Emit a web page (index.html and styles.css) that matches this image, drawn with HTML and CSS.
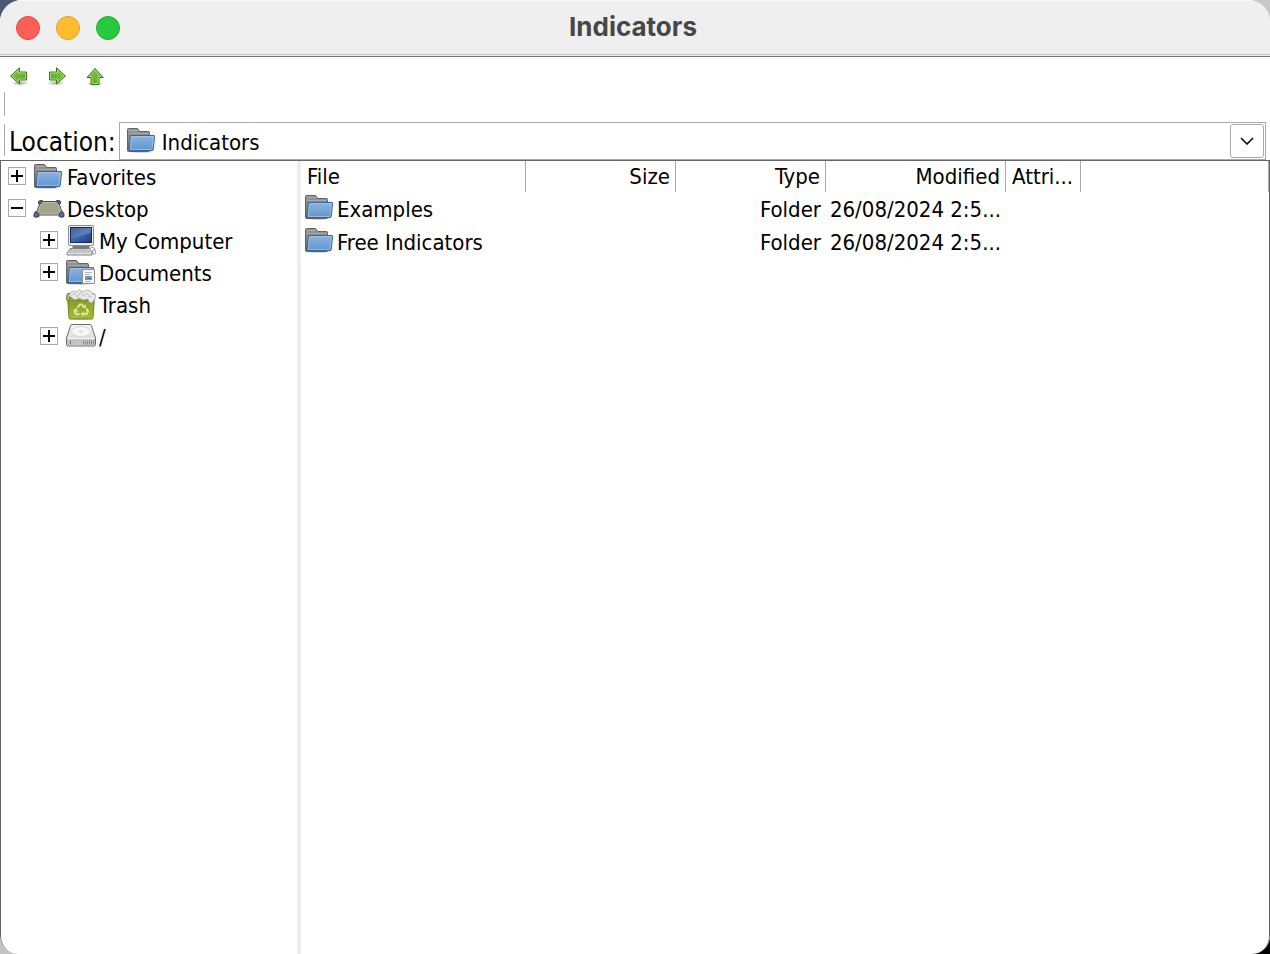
FILE: index.html
```html
<!DOCTYPE html>
<html lang="en">
<head>
<meta charset="utf-8">
<title>Indicators</title>
<link rel="stylesheet" href="styles.css">
</head>
<body>
<svg class="defs" aria-hidden="true">
  <defs>
    <linearGradient id="blue" x1="0" y1="0" x2="0" y2="1"><stop offset="0" stop-color="#8db5e0"/><stop offset="1" stop-color="#6095cd"/></linearGradient>
    <linearGradient id="gray" x1="0" y1="0" x2="0" y2="1"><stop offset="0" stop-color="#999"/><stop offset="1" stop-color="#696969"/></linearGradient>
    <linearGradient id="green" x1="0" y1="0" x2="1" y2="1"><stop offset="0" stop-color="#8bc95a"/><stop offset="1" stop-color="#4ba80c"/></linearGradient>
    <linearGradient id="screen" x1="0" y1="0" x2="1" y2="1"><stop offset="0" stop-color="#173a82"/><stop offset=".5" stop-color="#3e67ae"/><stop offset="1" stop-color="#163a83"/></linearGradient>
    <linearGradient id="metal" x1="0" y1="0" x2="0" y2="1"><stop offset="0" stop-color="#f8f8f8"/><stop offset="1" stop-color="#cfcfcf"/></linearGradient>
    <linearGradient id="bin" x1="0" y1="0" x2="0" y2="1"><stop offset="0" stop-color="#819720"/><stop offset="1" stop-color="#aabd3c"/></linearGradient>
    <radialGradient id="shade"><stop offset="0" stop-color="#000" stop-opacity=".35"/><stop offset="1" stop-color="#000" stop-opacity="0"/></radialGradient>
  </defs>
  <symbol id="folder" viewBox="0 0 32 32">
    <ellipse cx="15" cy="26.500" rx="14" ry="2" fill="url(#shade)"/>
    <path d="M1.500 25.500V4.500q0-1 1-1h8.500q1 0 1.500 1l1 2h9q1 0 1 1v18q0 1-1 1H2.500q-1 0-1-1z" fill="url(#gray)" stroke="#626262"/>
    <path d="M3 5.500h9M3 8.500h20" stroke="#b0b0b0" stroke-width=".7"/>
    <path d="M4.500 10.500h23.600q.6 0 .5.700l-1.300 13q-.1 1.300-1.300 1.300H4q-1 0-.8-1z" fill="url(#blue)" stroke="#3465a4"/>
    <path d="M5.300 11.500h22l-1.200 12q-.1 1-1 1H4.400z" fill="none" stroke="#a9c8ea" stroke-width=".7"/>
  </symbol>
  <symbol id="desktop" viewBox="0 0 32 32">
    <path d="M7.500 8.500h18l4.500 13.500H2.500z" fill="#a4a48f" stroke="#4f4f43"/>
    <path d="M8.300 9.500h16.400l3.800 11.500H4z" fill="none" stroke="#c2c2af" stroke-width=".8"/>
    <g fill="#55719e" stroke="#252f45" stroke-width=".9"><path d="M5.500 8.500q1-1.500 4-.8l-2.500 3.500-1.500-.7zM27.500 8.500q-1-1.500-4-.8l2.500 3.500 1.500-.7zM2.500 18.500l3 2 .5 3q-3 1.500-5 0-.5-3 1.500-5zM29.500 18.500l-3 2-.5 3q3 1.500 5 0 .5-3-1.500-5z"/></g>
  </symbol>
  <symbol id="computer" viewBox="0 0 32 32">
    <ellipse cx="16" cy="22" rx="9" ry="2" fill="#777"/>
    <rect x="3.500" y=".5" width="25" height="20" rx="1.500" fill="#ecece8" stroke="#8a8c88"/>
    <rect x="5.500" y="2.500" width="21" height="15" fill="url(#screen)" stroke="#122b62"/>
    <path d="M6 3h20v5q-10 2-20 6z" fill="#fff" opacity=".17"/>
    <path d="M5 23.500h20l2 5v1.500H2v-1.500z" fill="#e2e2df" stroke="#777" stroke-width=".9"/>
    <path d="M5.500 25h19M4.500 27h21" stroke="#888" stroke-dasharray="2 1"/>
    <path d="M26 22.500q5 0 3.500 2.500" fill="none" stroke="#999"/>
    <ellipse cx="29" cy="27" rx="1.700" ry="2.300" fill="#eee" stroke="#888" stroke-width=".8"/>
  </symbol>
  <symbol id="documents" viewBox="0 0 32 32">
    <use href="#folder"/>
    <path d="M17.500 12.500h12v14h-12z" fill="#f8f8f8" stroke="#8e8e8e"/>
    <path d="M20 15.500h7M20 17.500h5M20 24.500h6" stroke="#b5b5b5"/>
    <path d="M20 19h7v4h-7z" fill="#7aa1d2"/><path d="M21 22.500l2-2 3 2" stroke="#315b94" fill="none"/>
  </symbol>
  <symbol id="trash" viewBox="0 0 32 32">
    <ellipse cx="16" cy="29.500" rx="15" ry="2" fill="url(#shade)"/>
    <path d="M2.500 8.500h27l-1.500 20q0 1.500-1.500 1.500h-21q-1.500 0-1.500-1.500z" fill="url(#bin)" stroke="#70831b"/>
    <path d="M3 4.500h25.500q1 0 1 1v5.500H1.500l.5-5.500q0-1 1-1z" fill="#b4c070" stroke="#72822b"/>
    <path d="M4 7.500h23v2H4z" fill="#59663a"/>
    <path d="M4 7l2-4 3-1 3 1 2-2.500 4 2 4-1.500 3 1 3 3 3 1-1 4-3 4-3-1-1-3-5 1-4-2-4 2-3-2z" fill="#e9eae7" stroke="#a0a39d" stroke-width=".7"/>
    <path d="M6 7l4-3 2 4 4-5 2 4 4-3 2 4 3-1" fill="none" stroke="#b9bbb6" stroke-width=".8"/>
    <g fill="none" stroke="#dbe6a0" stroke-width="2"><path d="M12.500 18.500l2.500-3h2l2 2.500M21.500 19.500l1.500 3-1.500 2.500H18M14.500 25h-3.500l-1.500-2.500 1-2"/></g>
    <path d="M17 19h4v-4zM18.500 22.500v5l-3-2.500zM8 21.500l3.500-2.500 1.500 4z" fill="#dbe6a0"/>
  </symbol>
  <symbol id="drive" viewBox="0 0 32 32">
    <path d="M7 3.500h18q1 0 1.400 1L30.500 17v6.500q0 1.500-1.500 1.500H3q-1.500 0-1.500-1.500V17L5.600 4.500q.4-1 1.400-1z" fill="url(#metal)" stroke="#686868"/>
    <path d="M2 17.500h28v5.500q0 1.500-1.500 1.500h-25Q2 24.500 2 23z" fill="#c4c4c4"/>
    <path d="M2 17.500h28" stroke="#f8f8f8"/>
    <ellipse cx="16" cy="10.500" rx="9.500" ry="5" fill="#f7f7f7" stroke="#d8d8d8"/>
    <ellipse cx="16" cy="10.500" rx="2" ry="1" fill="#d4d4d4"/>
    <path d="M5.500 19.500v4" stroke="#777"/>
    <path d="M18.500 19.500v4M20.500 19.500v4M22.500 19.500v4M24.500 19.500v4M26.500 19.500v4M28.500 19.500v4" stroke="#888"/>
  </symbol>
  <symbol id="arrow" viewBox="0 0 20 20">
    <path d="M1.500 10L10.500 1.800V6H17.500v8H10.500v4z" fill="url(#green)" stroke="#3b7a08" stroke-linejoin="round"/>
    <path d="M3 10l6.500-6v3h7v6h-7v3z" fill="none" stroke="#b9e19a" stroke-width=".8"/>
  </symbol>
</svg>

<div class="window">
  <header class="titlebar">
    <div class="lights">
      <button class="light red" aria-label="Close"></button>
      <button class="light yellow" aria-label="Minimize"></button>
      <button class="light green" aria-label="Zoom"></button>
    </div>
    <h1 class="title">Indicators</h1>
  </header>

  <nav class="toolbar" aria-label="Navigation">
    <button class="tool" aria-label="Back"><svg viewBox="0 0 20 20"><ellipse cx="11" cy="17" rx="9" ry="3" fill="url(#shade)"/><use href="#arrow"/></svg></button>
    <button class="tool" aria-label="Forward"><svg viewBox="0 0 20 20"><ellipse cx="9" cy="17" rx="9" ry="3" fill="url(#shade)"/><use href="#arrow" transform="matrix(-1 0 0 1 20 0)"/></svg></button>
    <button class="tool" aria-label="Up"><svg viewBox="0 0 20 20"><ellipse cx="10" cy="18" rx="9" ry="2" fill="url(#shade)"/><use href="#arrow" transform="matrix(0 1 -1 0 20 1)"/></svg></button>
  </nav>
  <div class="spacer"></div>

  <div class="location">
    <label class="location-label" for="location">Location:</label>
    <div class="combo">
      <select id="location" class="combo-select"><option>Indicators</option></select>
      <svg class="icon combo-icon"><use href="#folder"/></svg>
      <span class="combo-arrow"><svg viewBox="0 0 14 8"><path d="M1 1l6 6 6-6"/></svg></span>
    </div>
  </div>

  <main class="panes">
    <ul class="tree">
      <li class="node"><button class="toggle plus" aria-label="Expand Favorites"></button><svg class="icon"><use href="#folder"/></svg><span class="text">Favorites</span></li>
      <li class="node"><button class="toggle" aria-label="Collapse Desktop"></button><svg class="icon"><use href="#desktop"/></svg><span class="text">Desktop</span></li>
      <li>
        <ul class="branch">
          <li class="node"><button class="toggle plus" aria-label="Expand My Computer"></button><svg class="icon"><use href="#computer"/></svg><span class="text">My Computer</span></li>
          <li class="node"><button class="toggle plus" aria-label="Expand Documents"></button><svg class="icon"><use href="#documents"/></svg><span class="text">Documents</span></li>
          <li class="node"><span class="no-toggle"></span><svg class="icon"><use href="#trash"/></svg><span class="text">Trash</span></li>
          <li class="node"><button class="toggle plus" aria-label="Expand /"></button><svg class="icon"><use href="#drive"/></svg><span class="text">/</span></li>
        </ul>
      </li>
    </ul>
    <div class="list">
      <table class="files">
        <colgroup><col class="c-file"><col class="c-mid"><col class="c-mid"><col class="c-date"><col class="c-attr"><col></colgroup>
        <thead>
          <tr><th>File</th><th class="num">Size</th><th class="num">Type</th><th class="num">Modified</th><th>Attri...</th><th></th></tr>
        </thead>
        <tbody>
          <tr><td><div class="name"><svg class="icon"><use href="#folder"/></svg><span>Examples</span></div></td><td></td><td class="num">Folder</td><td class="num">26/08/2024 2:5...</td><td></td><td></td></tr>
          <tr><td><div class="name"><svg class="icon"><use href="#folder"/></svg><span>Free Indicators</span></div></td><td></td><td class="num">Folder</td><td class="num">26/08/2024 2:5...</td><td></td><td></td></tr>
        </tbody>
      </table>
    </div>
  </main>
</div>
</body>
</html>
```
FILE: styles.css
```css
* { box-sizing: border-box; }

body {
  margin: 0;
  background:
    linear-gradient(#4b5874, #4b5874) left top / 40px 40px no-repeat,
    linear-gradient(#c9c9c9, #c9c9c9) right top / 40px 40px no-repeat,
    linear-gradient(#c4c4c4, #c4c4c4) left bottom / 40px 40px no-repeat,
    #000;
  color: #000;
  font: 22px/32px Tahoma, "DejaVu Sans Condensed", "Noto Sans", sans-serif;
}

button { padding: 0; border: 0; background: none; }
ul { margin: 0; padding: 0; list-style: none; }
.defs { position: absolute; width: 0; height: 0; }

.window {
  display: flex;
  flex-direction: column;
  min-height: 100vh;
  overflow: hidden;
  border-radius: 22px 22px 18px 18px;
  background: #fff;
}

.titlebar {
  display: grid;
  grid-template-columns: 1fr auto 1fr;
  align-items: center;
  height: 57px;
  padding: 0 20px 2px 16px;
  border-top: 1px solid #fafafa;
  border-bottom: 1px solid #777;
  background: linear-gradient(#c8c8c8, #c8c8c8) 0 53px / 100% 1px no-repeat, #efefef;
}
.lights { display: flex; gap: 16px; }
.light { width: 24px; height: 24px; border: 1px solid; border-radius: 50%; }
.red { background: #ff5f57; border-color: #e2483f; }
.yellow { background: #febc2e; border-color: #dfa023; }
.green { background: #28c840; border-color: #1dac2c; }
.title {
  margin: 0;
  padding-bottom: 2px;
  color: #474747;
  font: bold 26px/32px Inter, sans-serif;
}

.toolbar { display: flex; gap: 18px; height: 35px; padding: 9px 9px 0; }
.tool { width: 20px; height: 20px; }
.tool svg { display: block; width: 20px; height: 20px; }

.spacer { height: 24px; margin: 0 4px 6px; border-left: 1px solid #aaa; }

.location {
  display: flex;
  align-items: center;
  gap: 3px;
  height: 38px;
  margin: 0 4px;
  background: linear-gradient(#aaa, #aaa) 0 2px / 1px 32px no-repeat;
}
.location-label { padding: 2px 0 0 5px; font-size: 26px; white-space: nowrap; }
.combo { position: relative; flex: 1; }
.combo-select {
  display: block;
  width: 100%;
  height: 38px;
  padding: 4px 40px 0 42px;
  border: 1px solid #aaa;
  border-radius: 0;
  appearance: none;
  background: #fff;
  color: #000;
  font: inherit;
}
.combo-icon { position: absolute; left: 7px; top: 3px; }
.combo-arrow {
  position: absolute;
  top: 2px;
  right: 2px;
  display: grid;
  place-items: center;
  width: 34px;
  height: 34px;
  border: 1px solid #aaa;
  border-radius: 3px;
  pointer-events: none;
}
.combo-arrow svg { width: 14px; height: 8px; fill: none; stroke: #000; stroke-width: 1.5; }

.icon { display: block; flex: none; width: 32px; height: 32px; }

.panes {
  display: flex;
  flex: 1;
  border: 1px solid #666;
  border-bottom: 0;
  border-radius: 0 0 18px 18px;
}
.tree {
  flex: none;
  width: 300px;
  border-right: 4px solid #eee;
}
.branch { padding-left: 32px; }
.node { display: flex; align-items: center; height: 32px; padding-left: 7px; white-space: nowrap; }
.node .icon { margin: 0 2px 0 7px; }
.text { padding-top: 2px; }
.toggle, .no-toggle { flex: none; width: 18px; height: 18px; margin-bottom: 2px; }
.toggle {
  border: 1px solid #aaa;
  background: linear-gradient(#000, #000) center / 12px 2px no-repeat;
}
.plus {
  background:
    linear-gradient(#000, #000) center / 12px 2px no-repeat,
    linear-gradient(#000, #000) center / 2px 12px no-repeat;
}

.list { flex: 1; min-width: 0; }
.files { width: 100%; table-layout: fixed; border-collapse: separate; border-spacing: 0; }
.c-file { width: 225px; }
.c-mid { width: 150px; }
.c-date { width: 180px; }
.c-attr { width: 75px; }
th, td { text-align: left; line-height: 31px; white-space: nowrap; }
th { height: 31px; padding: 0 5px 0 6px; border-right: 1px solid #aaa; font-weight: normal; }
td { height: 33px; padding: 2px 5px 0 3px; }
th.num, td.num { text-align: right; }
.name { display: flex; gap: 1px; }
.name .icon { margin-top: -2px; }
```
